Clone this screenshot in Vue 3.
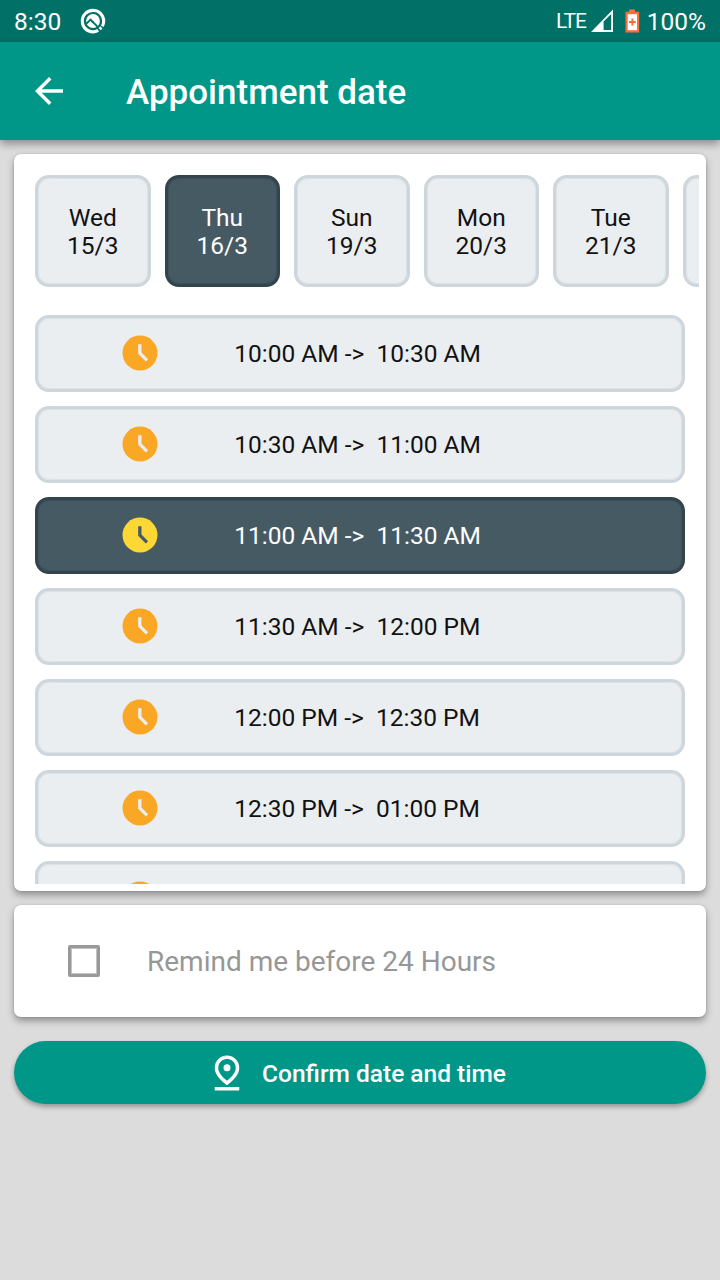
<script setup>
const days = [
  { name: 'Wed', date: '15/3' },
  { name: 'Thu', date: '16/3', selected: true },
  { name: 'Sun', date: '19/3' },
  { name: 'Mon', date: '20/3' },
  { name: 'Tue', date: '21/3' },
  { name: '', date: '' },
]
const slots = [
  { label: '10:00 AM ->  10:30 AM' },
  { label: '10:30 AM ->  11:00 AM' },
  { label: '11:00 AM ->  11:30 AM', selected: true },
  { label: '11:30 AM ->  12:00 PM' },
  { label: '12:00 PM ->  12:30 PM' },
  { label: '12:30 PM ->  01:00 PM' },
  { label: '' },
]
</script>

<template>
  <div class="screen">
    <div class="status">
      <span class="time">8:30</span>
      <svg class="q" width="28" height="28" viewBox="0 0 28 28">
        <path d="M19.2 23.4A10.7 10.7 0 1 1 23.3 19.3" fill="none" stroke="#fff" stroke-width="3.1" />
        <path d="M20.4 20.2L22.6 22.4" stroke="#fff" stroke-width="2.4" />
        <circle cx="14" cy="14" r="6.9" fill="#fff" />
        <path d="M6.6 17.4L11.6 12.6L14.4 15.6" fill="none" stroke="#017066" stroke-width="2" />
        <path d="M13.2 14.4L19.8 21" stroke="#017066" stroke-width="1.8" />
      </svg>
      <span class="grow"></span>
      <span class="lte">LTE</span>
      <svg class="signal" width="23" height="24" viewBox="0 0 23 24">
        <path d="M0 23L22 0.5V23Z" fill="#fff" />
        <path d="M12.6 21V12.6L20.2 5V21Z" fill="#017066" />
      </svg>
      <svg class="battery" width="15" height="24" viewBox="0 0 15 24">
        <path d="M4.2 0.5h5.8v2.3h4.2v20.7H0.5V2.8h3.7z" fill="#ff6d3a" />
        <path d="M2.7 5.2h9.3v16H2.7z" fill="#fff" />
        <path d="M7.4 9.6v6.8M4 13h6.8" stroke="#ff6d3a" stroke-width="2" />
      </svg>
      <span class="pct">100%</span>
    </div>

    <header class="bar">
      <svg width="42" height="42" viewBox="0 0 24 24">
        <path fill="#fff" d="M20 11H7.83l5.59-5.59L12 4l-8 8 8 8 1.41-1.41L7.83 13H20v-2z" />
      </svg>
      <h1>Appointment date</h1>
    </header>

    <main>
      <section class="card picker">
        <div class="days">
          <div v-for="(d, i) in days" :key="i" class="box day" :class="{ selected: d.selected }">
            <span>{{ d.name }}</span>
            <span>{{ d.date }}</span>
          </div>
        </div>
        <div class="slots">
          <div v-for="(s, i) in slots" :key="i" class="box slot" :class="{ selected: s.selected }">
            <svg class="clock" width="42" height="42" viewBox="0 0 24 24">
              <circle class="face" cx="12" cy="12" r="10" />
              <path class="hands" d="M11.9 7v5.1l4.1 4.1" />
            </svg>
            <span class="label">{{ s.label }}</span>
          </div>
        </div>
      </section>

      <section class="card remind">
        <span class="check"></span>
        <span>Remind me before 24 Hours</span>
      </section>

      <button class="confirm">
        <svg width="42" height="42" viewBox="0 0 24 24" fill="#fff">
          <path d="M12 4c1.93 0 5 1.4 5 5.15 0 2.16-1.72 4.67-5 7.32-3.28-2.65-5-5.17-5-7.32C7 5.4 10.07 4 12 4m0-2C8.73 2 5 4.46 5 9.15c0 3.12 2.33 6.41 7 9.85 4.67-3.44 7-6.73 7-9.85C19 4.46 15.27 2 12 2z" />
          <circle cx="12" cy="9" r="2" />
          <path d="M5 20h14v2H5z" />
        </svg>
        <span class="confirm-text">Confirm date and time</span>
      </button>
    </main>
  </div>
</template>

<style>
body { background: #dcdcdc; }
</style>

<style scoped>
.screen {
  width: 720px;
  height: 1280px;
  overflow: hidden;
  background: #dcdcdc;
  font-family: Roboto, sans-serif;
  font-size: 24.5px;
  color: #121212;
}
.status {
  height: 42px;
  box-sizing: border-box;
  padding: 0 14px 0 14px;
  display: flex;
  align-items: center;
  background: #017066;
  color: #fff;
  line-height: 42px;
}
.time { padding-top: 2px; }
.q { margin-left: 18px; }
.grow { flex: 1; }
.lte { font-size: 21px; font-weight: 400; letter-spacing: -1.1px; }
.signal { margin-left: 5px; }
.battery { margin-left: 11px; }
.pct { margin: 2px 0 0 7px; }
.bar {
  height: 98px;
  box-sizing: border-box;
  padding-left: 28px;
  display: flex;
  align-items: center;
  gap: 56px;
  background: #009788;
  box-shadow: 0 4px 8px rgba(0, 0, 0, 0.36);
}
h1 {
  margin: 2px 0 0;
  font-size: 35px;
  font-weight: 500;
  color: #fff;
}
main {
  display: flex;
  flex-direction: column;
  padding: 14px;
}
.card {
  box-sizing: border-box;
  background: #fff;
  border-radius: 7px;
  box-shadow: 0 4px 7px rgba(0, 0, 0, 0.34), 0 0 2px rgba(0, 0, 0, 0.16);
}
.picker {
  height: 737px;
  padding: 21px 7px 7px 21px;
  display: flex;
  flex-direction: column;
  gap: 28px;
}
.days {
  flex: none;
  display: flex;
  gap: 14px;
  overflow: hidden;
}
.box {
  flex: none;
  box-sizing: border-box;
  border: 3px solid #cdd6da;
  border-radius: 14px;
  background: #eaeef1;
  box-shadow: inset 0 0 0 1px #dce3e6;
}
.box.selected {
  background: #465a64;
  border-color: #34444d;
  box-shadow: inset 0 0 0 1px #3e505a;
  color: #fff;
}
.day {
  width: 115.5px;
  height: 112px;
  padding-top: 2px;
  display: flex;
  flex-direction: column;
  align-items: center;
  justify-content: center;
  line-height: 28px;
}
.slots {
  flex: 1;
  min-height: 0;
  margin-right: 14px;
  display: flex;
  flex-direction: column;
  gap: 14px;
  overflow: hidden;
}
.slot {
  height: 77px;
  padding: 0 0 0.5px 80.7px;
  display: flex;
  align-items: center;
}
.label {
  margin-left: 73.5px;
  padding-top: 1px;
  white-space: pre;
}
.face { fill: #f9a725; }
.hands { fill: none; stroke: #eaeef1; stroke-width: 1.9; }
.selected .face { fill: #fdd835; }
.selected .hands { stroke: #465a64; }
.remind {
  height: 112px;
  margin-top: 14px;
  padding-left: 54px;
  display: flex;
  align-items: center;
  gap: 47px;
  font-size: 28px;
  color: #979797;
}
.check {
  box-sizing: border-box;
  width: 32px;
  height: 32px;
  border: 3px solid #999;
  border-radius: 2px;
  box-shadow: inset 0 0 0 1px #c4c4c4;
}
.confirm {
  height: 63px;
  margin-top: 24px;
  padding: 0 8px 0 0;
  display: flex;
  align-items: center;
  justify-content: center;
  gap: 14px;
  border: 0;
  border-radius: 32px;
  background: #009788;
  box-shadow: 0 3px 5px rgba(0, 0, 0, 0.32);
  color: #fff;
  font: 500 24.5px Roboto, sans-serif;
}
.confirm-text { padding-top: 1px; }
</style>
